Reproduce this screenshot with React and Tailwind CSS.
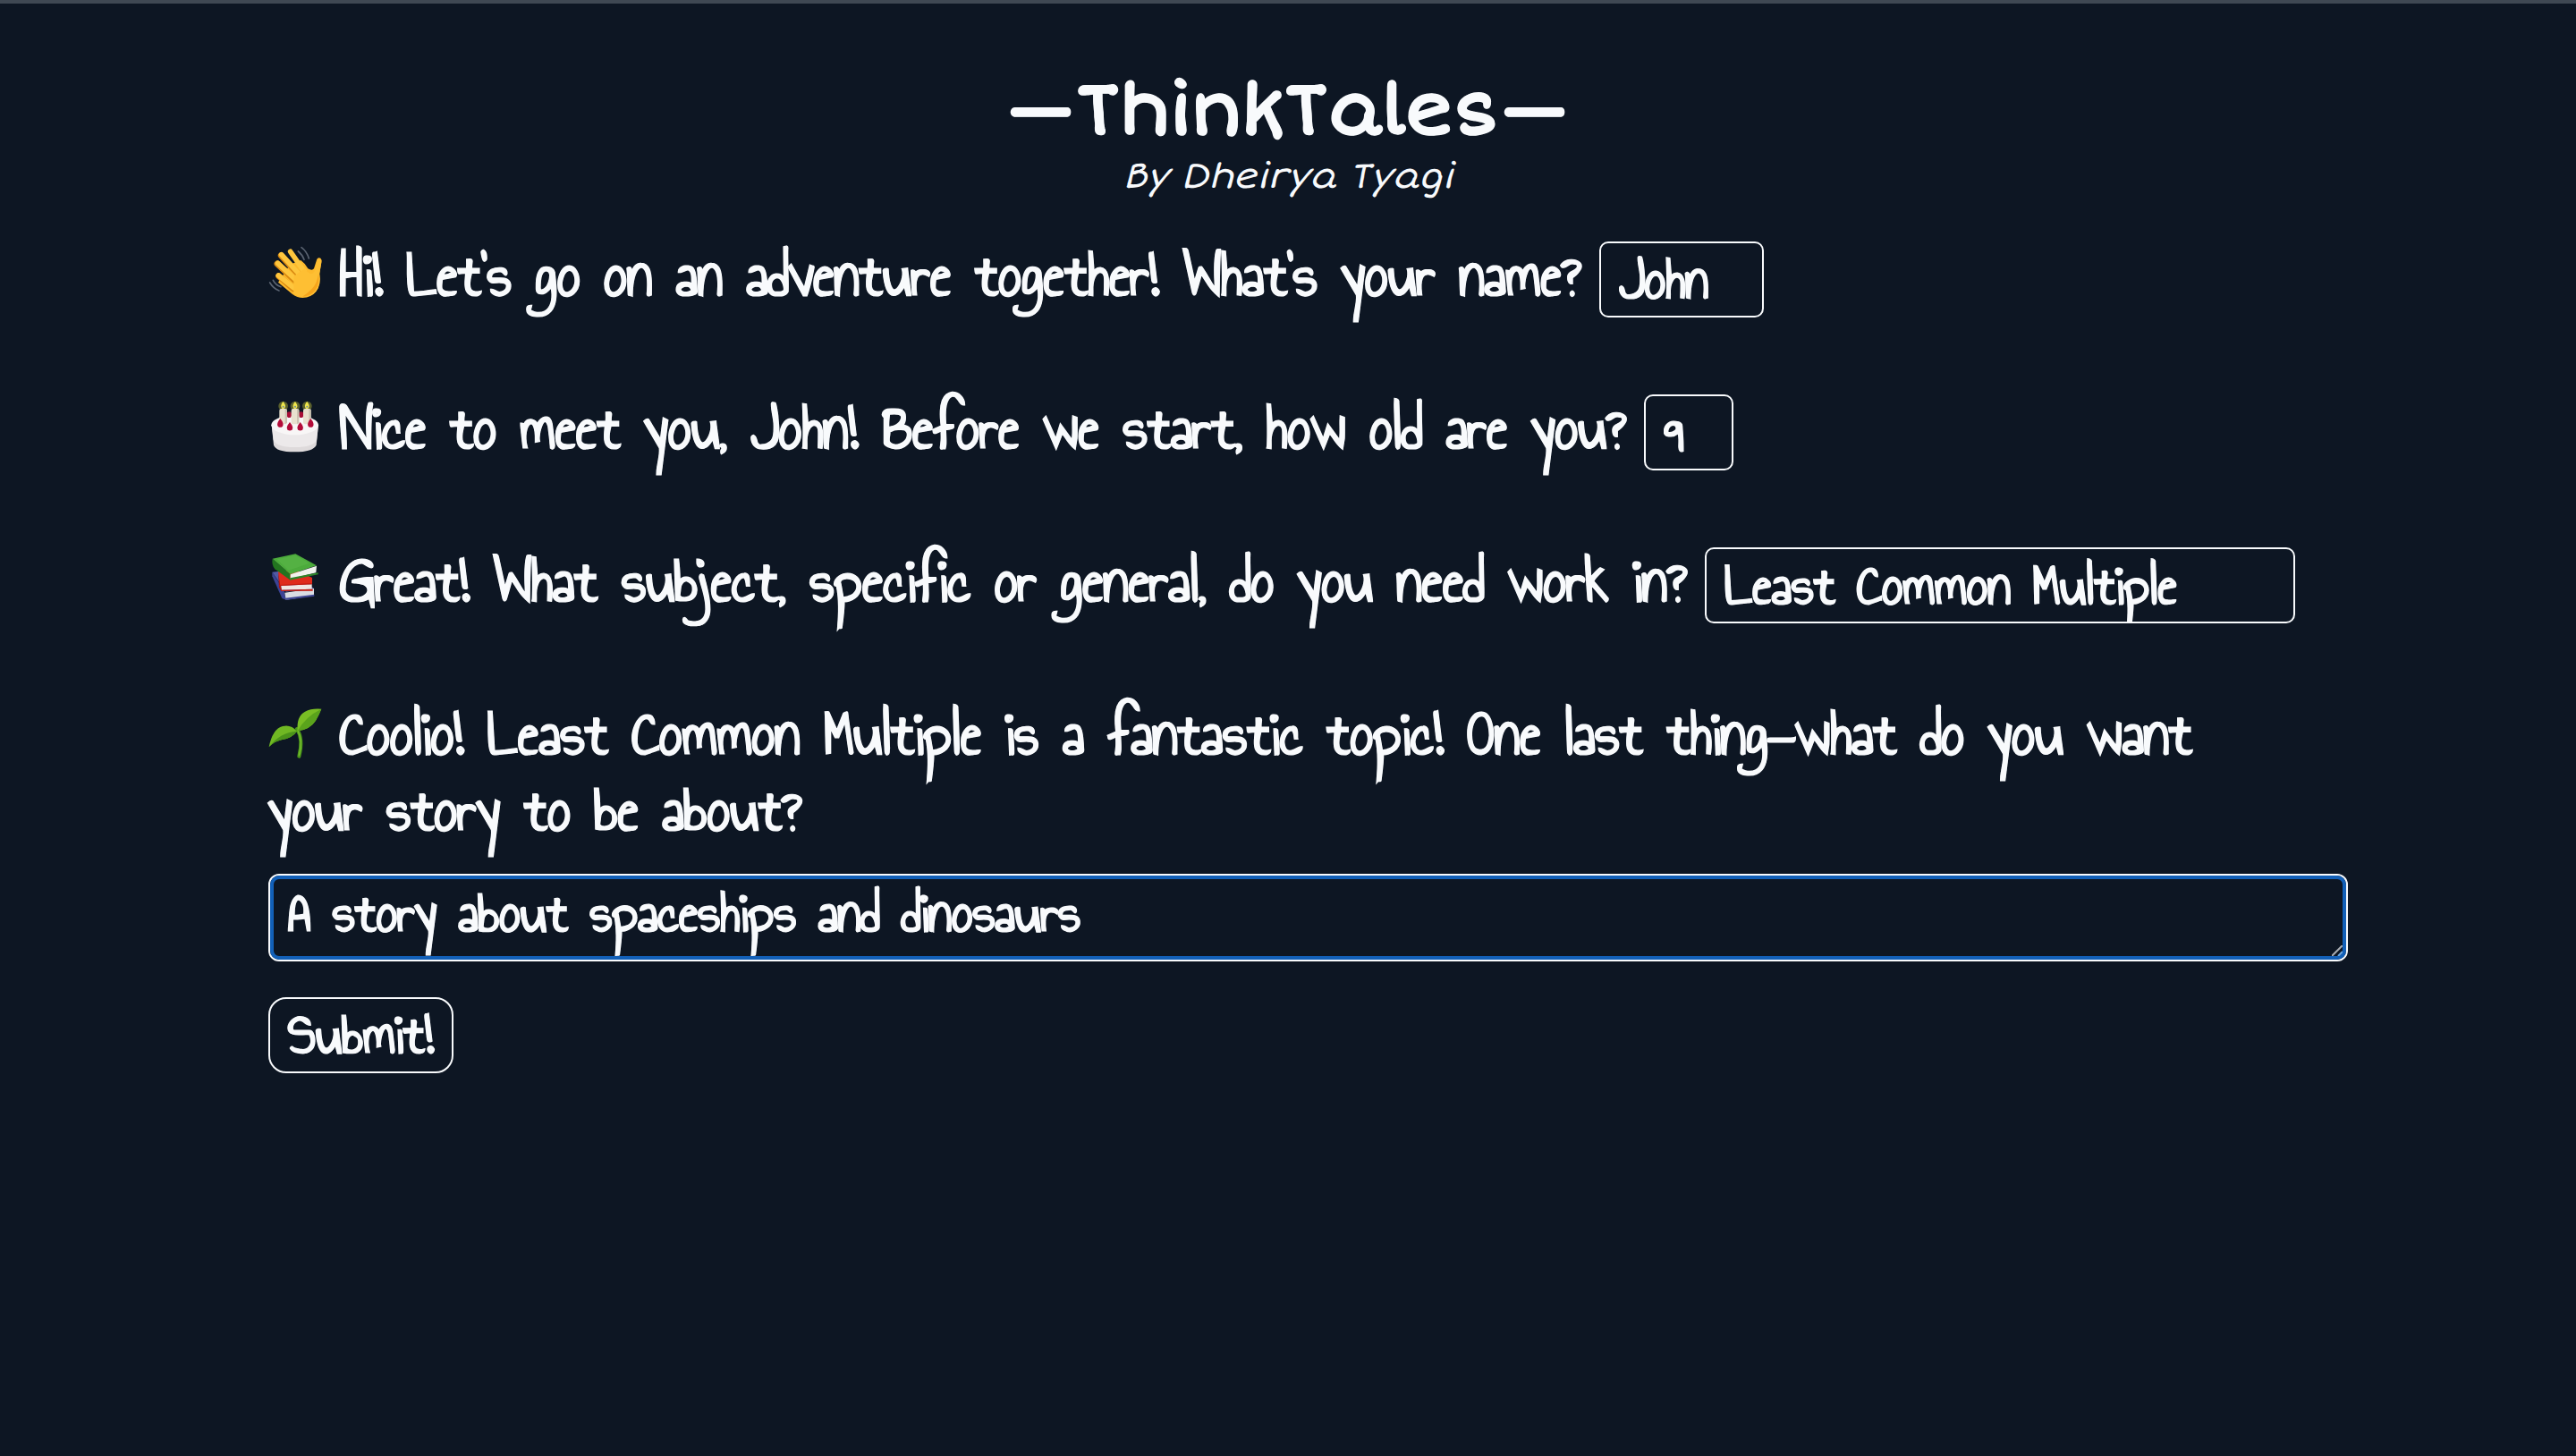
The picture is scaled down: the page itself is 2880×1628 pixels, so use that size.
import React, { useState } from "react";

const iconClass = "mr-5 inline-block h-16 w-15 align-[-8px]";
const rowClass = "flex h-[85px] items-start whitespace-nowrap";
const fieldClass =
  "mt-1 ml-5 h-[85px] rounded-[10px] border-2 border-slate-50 bg-transparent px-5 text-[65px] leading-[81px] font-bold text-slate-50 outline-none [-webkit-text-stroke:1px]";

function WavingHand() {
  return (
    <svg viewBox="33 45 180 192" className={iconClass} role="img" aria-label="Waving hand">
      <g fill="none" stroke="#5b6472" strokeWidth="5" strokeLinecap="round">
        <path d="M133 66q14 11 20 28M144 53q18 13 25 37" />
        <path d="M49 163q8 16 26 22M38 171q12 20 31 27" />
      </g>
      <path d="M196 92q6-7 12-3q5 4 3 12l-6 40q6 38-12 60q-16 20-45 21q-18 0-34-12l-48-40l40-60l36-14q14 10 24 28q14 8 20 0z" fill="#fdb92c" />
      <g fill="none" stroke="#d98a12" strokeWidth="21" strokeLinecap="round">
        <path d="M68 149l48 42M63 108l58 55M76 80l60 66" />
      </g>
      <g fill="none" stroke="#fec63d" strokeWidth="17" strokeLinecap="round">
        <path d="M67 147l52 42M65 106l60 55M77 77l62 68M107 67l46 66" />
      </g>
      <path d="M118 150l36-26q12 14 20 17q10 2 14-9l10-36q4-8 11-4q4 4 2 12l-7 38q6 36-11 58q-16 19-44 19q-17 0-31-11z" fill="#febf33" />
      <path d="M201 141q5 36-12 58q-16 19-42 19q16-10 32-26q18-18 22-51z" fill="#f6a51c" />
    </svg>
  );
}

function BirthdayCake() {
  return (
    <svg viewBox="33 48 180 192" className={iconClass} role="img" aria-label="Birthday cake">
      <path d="M44 137l7 69q8 23 70 23t73-23l7-69z" fill="#dedadb" />
      <path d="M44 137l6 52q10 24 72 24t73-24l6-52z" fill="#ece9ea" />
      <ellipse cx="122" cy="139" rx="79" ry="33" fill="#f8f6f6" />
      <g fill="#a70d35">
        <ellipse cx="103" cy="104" rx="8" ry="10" />
        <ellipse cx="143" cy="104" rx="8" ry="10" />
      </g>
      {[83, 123, 163].map((x) => (
        <g key={x}>
          <circle cx={x} cy="75" r="16" fill="#858b32" opacity=".65" />
          <rect x={x - 13} y="84" width="26" height="52" rx="6" fill="#e8e1cf" />
          <path d={`M${x + 6} 85v50l7-4v-44z`} fill="#cbc3b2" />
          <path d={`M${x} 60q9 12 7 18t-7 7t-7-7t7-18z`} fill="#efe64c" />
          <circle cx={x} cy="77" r="3" fill="#768ea0" />
        </g>
      ))}
      <g fill="#b30c39">
        <path d="M73 117q14 17 8 26q-8 7-16 0q-6-9 8-26z" />
        <path d="M105 129q14 17 8 25q-8 7-16 0q-6-8 8-25z" />
        <path d="M140 129q14 17 8 25q-8 7-16 0q-6-8 8-25z" />
        <path d="M175 117q14 17 8 26q-8 7-16 0q-6-9 8-26z" />
      </g>
    </svg>
  );
}

function Books() {
  return (
    <svg viewBox="33 560 180 192" className={iconClass} role="img" aria-label="Stack of books">
      <path d="M46 631l40 62l6 31l-13-5l-33-74z" fill="#3b4394" />
      <path d="M46 631l50-6l90 60l-94 12z" fill="#5159a5" />
      <path d="M88 700l98-14v24l-94 14z" fill="#d9dce2" />
      <path d="M90 718l97-12v6l-95 13z" fill="#3e4591" />
      <path d="M66 632l10 44v18l-7-12z" fill="#a7140f" />
      <path d="M66 630l56-8l58 28v22l-107 5z" fill="#df2b1c" />
      <path d="M76 677l103-5v16l-102 3z" fill="#f0e6e3" />
      <path d="M70 674l109-6v4l-105 5l4 14l104-3v6l-106 1z" fill="#c31c12" />
      <path d="M47 586l60 52l-2 19l-50-36q-12-16-8-35z" fill="#22741f" />
      <path d="M47 586l77-16l71 39l-88 29z" fill="#4cab3c" />
      <path d="M62 588l61-13l48 26l-70 24z" fill="#5ab648" opacity=".6" />
      <path d="M107 639l88-29l-2 23l-86 21z" fill="#f0f2ec" />
      <path d="M106 651l94-18v6l-95 19z" fill="#2c8527" />
    </svg>
  );
}

function Seedling() {
  return (
    <svg viewBox="0 -4 180 192" className={iconClass} role="img" aria-label="Seedling">
      <path d="M96 80q22 34 7 92" fill="none" stroke="#4d9a1b" strokeWidth="12" strokeLinecap="round" />
      <path d="M99 86q17 34 4 82" fill="none" stroke="#7cc032" strokeWidth="4" strokeLinecap="round" />
      <path d="M98 87q-4-50 25-65q22-12 55-9q-8 20-19 39q-19 30-61 35z" fill="#79bd24" />
      <path d="M98 87q26-48 80-74q-8 20-19 39q-19 30-61 35z" fill="#5aa31c" />
      <path d="M96 88q-20-24-48-17q-34 9-46 70q18-19 42-24q36-6 52-29z" fill="#70b823" />
      <path d="M96 88q-58 4-94 53q18-19 42-24q36-6 52-29z" fill="#4b941a" />
    </svg>
  );
}

export default function App() {
  const [name, setName] = useState("John");
  const [age, setAge] = useState("9");
  const [subject, setSubject] = useState("Least Common Multiple");
  const [story, setStory] = useState("A story about spaceships and dinosaurs");

  return (
    <div className="min-h-screen border-t-4 border-[#3f4853] bg-[#0d1623] text-slate-50">
      <header className="pt-17 text-center font-['Short_Stack','Comic_Neue','Liberation_Sans',sans-serif]">
        <h1 className="text-[80px] leading-[104px] font-bold [-webkit-text-stroke:1px]">—ThinkTales—</h1>
        <p className="text-[40px] leading-11 italic">By Dheirya Tyagi</p>
      </header>
      <form
        className="mt-[46px] pr-[255px] pl-[300px] font-['Annie_Use_Your_Telescope','Patrick_Hand','Liberation_Sans',cursive] text-[71px] leading-[85px] font-bold [-webkit-text-stroke:1px]"
        onSubmit={(event) => event.preventDefault()}
      >
        <div className="flex flex-col gap-[86px]">
          <div className={rowClass}>
            <label htmlFor="name"><WavingHand />Hi! Let's go on an adventure together! What's your name?</label>
            <input id="name" value={name} onChange={(e) => setName(e.target.value)} className={`${fieldClass} w-[184px]`} />
          </div>
          <div className={rowClass}>
            <label htmlFor="age"><BirthdayCake />{`Nice to meet you, ${name}! Before we start, how old are you?`}</label>
            <input id="age" value={age} onChange={(e) => setAge(e.target.value)} className={`${fieldClass} w-[100px]`} />
          </div>
          <div className={rowClass}>
            <label htmlFor="subject"><Books />Great! What subject, specific or general, do you need work in?</label>
            <input id="subject" value={subject} onChange={(e) => setSubject(e.target.value)} className={`${fieldClass} w-[660px]`} />
          </div>
          <label htmlFor="story" className="block pr-11">
            <Seedling />{`Coolio! ${subject} is a fantastic topic! One last thing—what do you want your story to be about?`}
          </label>
        </div>
        <div className="relative mt-7">
          <textarea
            id="story"
            rows={1}
            value={story}
            onChange={(e) => setStory(e.target.value)}
            className="block h-[98px] w-full resize-none overflow-hidden rounded-xl border-2 border-slate-50 bg-transparent px-5 text-[65px] leading-[85px] font-bold text-slate-50 outline-4 -outline-offset-6 outline-[#1260b8] [-webkit-text-stroke:1px]"
          />
          <svg viewBox="0 0 12 12" className="pointer-events-none absolute right-1.5 bottom-1.5 size-3" fill="none" aria-hidden="true">
            <path d="M0 12L12 0" stroke="#a9adb3" strokeWidth="2" />
            <path d="M7 12L12 7" stroke="#6fa8e0" strokeWidth="2" />
          </svg>
        </div>
        <button type="submit" className="mt-10 block h-[85px] rounded-[20px] border-2 border-slate-50 px-5 text-[65px] leading-[81px] font-bold [-webkit-text-stroke:1px]">
          Submit!
        </button>
      </form>
    </div>
  );
}
